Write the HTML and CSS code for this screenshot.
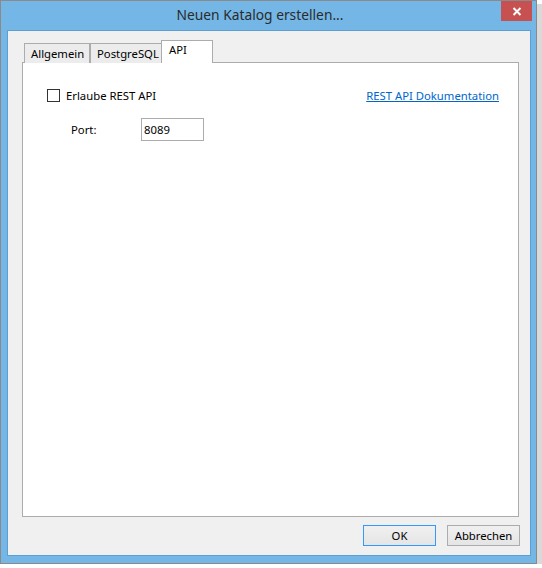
FILE: index.html
```html
<!DOCTYPE html>
<html lang="de">
<head>
<meta charset="utf-8">
<title>Neuen Katalog erstellen...</title>
<link rel="stylesheet" href="styles.css">
</head>
<body>
<div class="window">
  <div class="titlebar">
    <div class="title">Neuen Katalog erstellen...</div>
    <div class="close">
      <svg width="10" height="9" viewBox="0 0 10 9"><path d="M1.5 1 L8.5 8 M8.5 1 L1.5 8" stroke="#fff" stroke-width="2" fill="none"/></svg>
    </div>
  </div>
  <div class="client">
    <div class="tabs">
      <div class="tab tab-allgemein">Allgemein</div>
      <div class="tab tab-postgres">PostgreSQL</div>
      <div class="tab tab-api selected">API</div>
    </div>
    <div class="panel">
      <div class="row-api">
        <label class="check"><span class="box"></span><span class="check-label">Erlaube REST API</span></label>
        <a class="link" href="#">REST API Dokumentation</a>
      </div>
      <div class="row-port">
        <span class="port-label">Port:</span>
        <div class="input">8089</div>
      </div>
    </div>
    <div class="buttons">
      <button class="btn default">OK</button>
      <button class="btn">Abbrechen</button>
    </div>
  </div>
</div>
</body>
</html>
```
FILE: styles.css
```css
* { box-sizing: border-box; }
html, body { margin: 0; padding: 0; background: #fff; }
body { font-family: "Noto Sans", "Open Sans", sans-serif; font-size: 11.3px; color: #000; }

.window {
  width: 537px;
  height: 564px;
  border: 1px solid #8a8a8a;
  background: #74b7e7;
  box-shadow: 5px 4px 0 #d9d9d9;
  display: flex;
  flex-direction: column;
  padding: 0 5px 7px 6px;
}

.titlebar {
  height: 29px;
  display: flex;
  align-items: flex-start;
  margin-right: -1px;
}
.title {
  flex: 1;
  text-align: center;
  padding-left: 12px;
  font-size: 13.8px;
  line-height: 28px;
  color: #2b2b2b;
}
.close {
  width: 31px;
  height: 20px;
  background: #c75050;
  display: flex;
  align-items: center;
  justify-content: center;
}

.client {
  flex: 1;
  border: 1px solid #5e9fd3;
  background: #f0f0f0;
  display: flex;
  flex-direction: column;
  padding: 9px 11px 9px 14px;
}

.tabs {
  display: flex;
  align-items: flex-end;
  height: 23px;
  margin-left: 2px;
  margin-bottom: -1px;
  position: relative;
  z-index: 1;
}
.tab {
  height: 20px;
  border: 1px solid #acacac;
  border-bottom: none;
  background: #ececec;
  padding-left: 6px;
  line-height: 19px;
  color: #000;
}
.tab-allgemein { width: 66px; }
.tab-postgres { width: 71px; border-right: none; }
.tab-api { width: 52px; }
.tab.selected {
  height: 23px;
  background: #fff;
  padding-left: 7px;
  line-height: 17px;
}

.panel {
  flex: 1;
  border: 1px solid #acacac;
  background: #fff;
  padding: 25px 19px 0 24px;
}

.row-api {
  display: flex;
  align-items: center;
  justify-content: space-between;
  height: 15px;
}
.check { display: flex; align-items: center; }
.box {
  width: 13px;
  height: 13px;
  border: 1px solid #333;
  background: #fff;
}
.check-label { margin-left: 6px; }
.link { color: #0066cc; text-decoration: underline; }

.row-port {
  display: flex;
  align-items: center;
  margin-top: 15px;
  padding-left: 24px;
}
.port-label { width: 70px; }
.input {
  width: 63px;
  height: 23px;
  border: 1px solid #acacac;
  padding-left: 2px;
  line-height: 21px;
}

.buttons {
  display: flex;
  justify-content: flex-end;
  gap: 11px;
  margin-top: 8px;
  margin-right: -1px;
}
.btn {
  width: 73px;
  height: 21px;
  border: 1px solid #acacac;
  background: linear-gradient(#f0f0f0, #e5e5e5);
  font-family: inherit;
  font-size: 11.3px;
  color: #000;
  padding: 0;
}
.btn.default { border-color: #3399ff; }
```
